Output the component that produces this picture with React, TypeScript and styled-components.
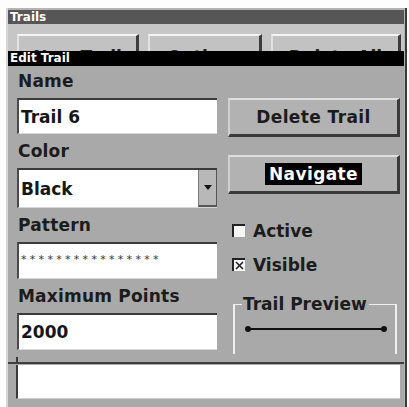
import React from "react";
import styled, { createGlobalStyle } from "styled-components";

const Global = createGlobalStyle`
  html, body { margin: 0; padding: 0; background: #ffffff; }
  body { font-family: "DejaVu Sans", Verdana, sans-serif; }
`;

const Screen = styled.div`
  width: 409px;
  height: 407px;
  background: #fdfdfd;
  padding: 8px 2px 0 6px;
  box-sizing: border-box;
  overflow: hidden;
`;

const Frame = styled.div`
  height: 399px;
  background: #b4b4b4;
  border-left: 2px solid #d6d6d6;
  border-right: 2px solid #3a3a3a;
  padding: 2px 1px 0 0;
  box-sizing: border-box;
  display: flex;
  flex-direction: column;
`;

const TitleBar = styled.div<{ $dark?: boolean }>`
  height: ${(p) => (p.$dark ? 15 : 14)}px;
  background: ${(p) => (p.$dark ? "#000000" : "#565656")};
  color: #ffffff;
  font-weight: bold;
  font-size: 12px;
  line-height: ${(p) => (p.$dark ? 15 : 14)}px;
  padding-left: 2px;
  flex: none;
`;

const ButtonStrip = styled.div`
  height: 27px;
  background: #c6c6c6;
  display: flex;
  gap: 9px;
  padding: 10px 4px 0 9px;
  box-sizing: border-box;
  overflow: hidden;
  flex: none;
`;

const StripButton = styled.div<{ $w: number }>`
  width: ${(p) => p.$w}px;
  height: 36px;
  background: #c2c2c2;
  border-top: 2px solid #f4f4f4;
  border-left: 2px solid #e2e2e2;
  border-right: 3px solid #3c3c3c;
  box-sizing: border-box;
  font-weight: bold;
  font-size: 17px;
  line-height: 20px;
  color: #222;
  text-align: center;
  padding-top: 11px;
  flex: none;
`;

const Body = styled.div`
  height: 291px;
  background: #a9a9a9;
  display: grid;
  grid-template-columns: 200px 172px;
  column-gap: 11px;
  padding: 0 0 0 9px;
  flex: none;
`;

const Column = styled.div`
  display: flex;
  flex-direction: column;
`;

const Label = styled.div`
  height: 32px;
  display: flex;
  align-items: flex-end;
  padding: 0 0 7px 1px;
  box-sizing: border-box;
  font-weight: bold;
  font-size: 17px;
  color: #1c1c1c;
  letter-spacing: 0.2px;
`;

const Field = styled.div<{ $h: number }>`
  height: ${(p) => p.$h}px;
  margin-bottom: 2px;
  background: #ffffff;
  border-top: 2px solid #3a3a3a;
  border-left: 2px solid #4a4a4a;
  border-bottom: 1px solid #d8d8d8;
  box-sizing: border-box;
  display: flex;
  align-items: center;
  padding-left: 2px;
  font-weight: bold;
  font-size: 17px;
  color: #161616;
`;

const SelectField = styled(Field)`
  padding-right: 0;
  align-items: stretch;
`;

const SelectText = styled.div`
  flex: 1;
  display: flex;
  align-items: center;
`;

const DropButton = styled.div`
  width: 17px;
  background: #b8b8b8;
  border-left: 1px solid #7a7a7a;
  border-right: 1px solid #555;
  border-bottom: 2px solid #555;
  display: flex;
  align-items: center;
  justify-content: center;
`;

const Stars = styled.span`
  font-size: 11px;
  font-weight: normal;
  letter-spacing: 3.3px;
  color: #333;
  margin-top: -4px;
`;

const RightColumn = styled.div`
  display: flex;
  flex-direction: column;
  padding-top: 32px;
`;

const Button = styled.div`
  height: 39px;
  background: #b2b2b2;
  border-top: 2px solid #dedede;
  border-left: 2px solid #d0d0d0;
  border-right: 3px solid #3a3a3a;
  border-bottom: 3px solid #3a3a3a;
  box-sizing: border-box;
  display: flex;
  align-items: center;
  justify-content: center;
  font-weight: bold;
  font-size: 17px;
  letter-spacing: 0.4px;
  color: #1c1c1c;
  margin-bottom: 18px;
`;

const Highlight = styled.span`
  background: #000;
  color: #fff;
  padding: 2px 4px 1px;
  line-height: 19px;
`;

const CheckRow = styled.div`
  display: flex;
  align-items: center;
  gap: 8px;
  height: 34px;
  padding-left: 4px;
  font-weight: bold;
  font-size: 17px;
  color: #1c1c1c;
  padding-top: 3px;
  box-sizing: border-box;
`;

const Box = styled.div`
  width: 13px;
  height: 13px;
  background: #f6f6f6;
  border-top: 2px solid #222;
  border-left: 2px solid #222;
  box-sizing: border-box;
  display: flex;
  align-items: center;
  justify-content: center;
`;

const Preview = styled.fieldset`
  margin: 14px 6px 0 5px;
  padding: 5px 8px 0 10px;
  border: none;
  border-top: 1px solid #efefef;
  border-left: 2px solid #efefef;
  border-right: 2px solid #efefef;
  height: 60px;
  box-sizing: border-box;
`;

const Legend = styled.legend`
  font-weight: bold;
  font-size: 17px;
  color: #1c1c1c;
  padding: 0 2px 0 1px;
  margin-left: -3px;
`;

const Bottom = styled.div`
  flex: 1;
  background: #a9a9a9;
  padding: 5px 4px 0 8px;
  display: flex;
  flex-direction: column;
`;

const Rule = styled.div`
  height: 2px;
  background: #3e3e3e;
  margin-left: -8px;
  margin-right: -4px;
`;

const OutField = styled.div`
  height: 33px;
  background: #ffffff;
  border-left: 2px solid #3a3a3a;
  border-bottom: 1px solid #d0d0d0;
  margin-top: 1px;
`;

const LeftStub = styled.div`
  width: 2px;
  height: 5px;
  background: #3a3a3a;
  margin-top: -5px;
`;

export default function App() {
  return (
    <>
      <Global />
      <Screen>
        <Frame>
          <TitleBar>Trails</TitleBar>
          <ButtonStrip>
            <StripButton $w={122}>New Trail</StripButton>
            <StripButton $w={114}>Options</StripButton>
            <StripButton $w={130}>Delete All</StripButton>
          </ButtonStrip>
          <TitleBar $dark>Edit Trail</TitleBar>
          <Body>
            <Column>
              <Label>Name</Label>
              <Field $h={36}>Trail 6</Field>
              <Label>Color</Label>
              <SelectField $h={40}>
                <SelectText>Black</SelectText>
                <DropButton>
                  <svg width="8" height="5" viewBox="0 0 8 5">
                    <path d="M0 0 H8 L4 5 Z" fill="#111" />
                  </svg>
                </DropButton>
              </SelectField>
              <Label>Pattern</Label>
              <Field $h={37}>
                <Stars>****************</Stars>
              </Field>
              <Label>Maximum Points</Label>
              <Field $h={37}>2000</Field>
            </Column>
            <RightColumn>
              <Button>Delete Trail</Button>
              <Button>
                <Highlight>Navigate</Highlight>
              </Button>
              <CheckRow>
                <Box />
                Active
              </CheckRow>
              <CheckRow>
                <Box>
                  <svg width="9" height="9" viewBox="0 0 9 9">
                    <path d="M1 1 L8 8 M8 1 L1 8" stroke="#222" strokeWidth="1.6" />
                  </svg>
                </Box>
                Visible
              </CheckRow>
              <Preview>
                <Legend>Trail Preview</Legend>
                <svg width="142" height="10" viewBox="0 0 142 10">
                  <line x1="3" y1="5" x2="139" y2="5" stroke="#111" strokeWidth="2" />
                  <circle cx="3" cy="5" r="3" fill="#111" />
                  <circle cx="139" cy="5" r="3" fill="#111" />
                </svg>
              </Preview>
            </RightColumn>
          </Body>
          <Bottom>
            <LeftStub />
            <Rule />
            <OutField />
          </Bottom>
        </Frame>
      </Screen>
    </>
  );
}
